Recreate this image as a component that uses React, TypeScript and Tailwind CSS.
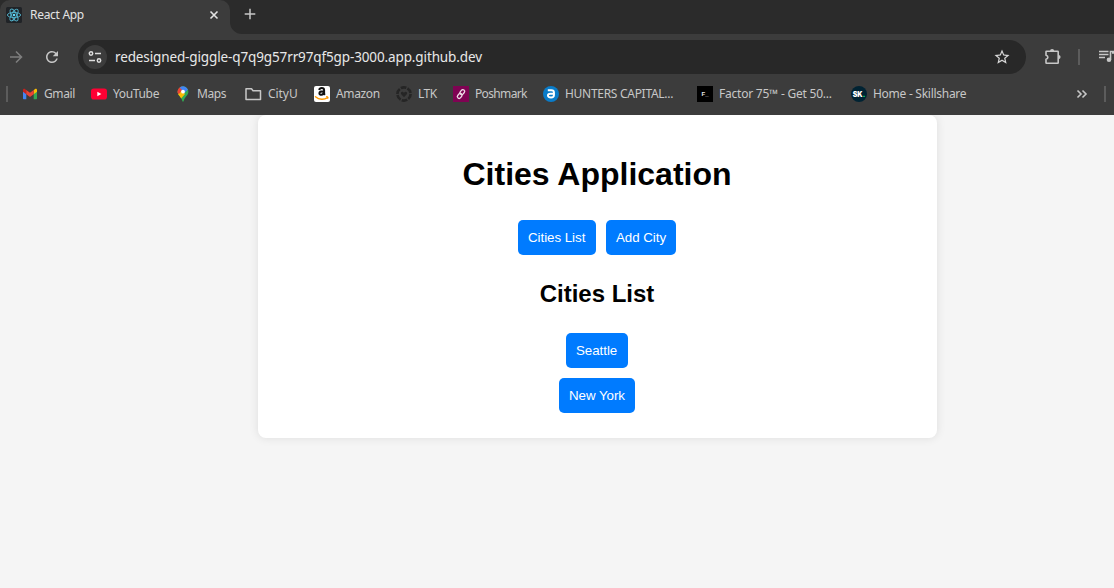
import type { ReactNode } from 'react';
import { MdRefresh, MdStarBorder } from 'react-icons/md';

const ReactLogo = () => (
  <svg width="16" height="16" viewBox="0 0 16 16">
    <rect width="16" height="16" rx="1.5" fill="#202327" />
    <g fill="none" stroke="#53b5cf" strokeWidth="0.9">
      <ellipse cx="8" cy="8" rx="6.6" ry="2.6" />
      <ellipse cx="8" cy="8" rx="6.6" ry="2.6" transform="rotate(60 8 8)" />
      <ellipse cx="8" cy="8" rx="6.6" ry="2.6" transform="rotate(120 8 8)" />
    </g>
    <circle cx="8" cy="8" r="1.3" fill="#61dafb" />
  </svg>
);

const Gmail = () => (
  <svg width="16" height="16" viewBox="0 0 16 16">
    <path d="M1 4.5V12.3c0 .6.4 1 1 1h2.3V7z" fill="#4285f4" />
    <path d="M15 4.5V12.3c0 .6-.4 1-1 1h-2.3V7z" fill="#34a853" />
    <path d="M11.7 4.3 13 3.1c.9-.7 2 0 2 1v1.7L11.7 8.3z" fill="#fbbc04" />
    <path d="M4.3 4.3 3 3.1C2.1 2.4 1 3.1 1 4.1v1.7l3.3 2.5z" fill="#c5221f" />
    <path d="M4.3 4 8 6.8 11.7 4v4.300L8 11.100 4.300 8.300z" fill="#ea4335" />
  </svg>
);

const YouTube = () => (
  <svg width="16" height="16" viewBox="0 0 16 16">
    <rect y="2.500" width="16" height="11" rx="2.800" fill="#ff0033" />
    <path d="M6.300 5.700v4.600L10.400 8z" fill="#fff" />
  </svg>
);

const Maps = () => (
  <svg width="16" height="16" viewBox="0 0 16 16">
    <defs>
      <clipPath id="pin">
        <path d="M8 .3A5.400 5.400 0 0 0 2.600 5.700c0 3.200 2.600 4.400 4.100 7.500.6 1.300.6 2.500 1.300 2.500s.7-1.200 1.300-2.500c1.500-3.100 4.100-4.300 4.100-7.500A5.400 5.400 0 0 0 8 .3z" />
      </clipPath>
    </defs>
    <g clipPath="url(#pin)">
      <path d="M0 0h16v16H0z" fill="#34a853" />
      <path d="M0 11 8 2v4l2 2-6 7H0z" fill="#fbbc04" />
      <path d="M0 0h7v3L3.500 7.500 0 5z" fill="#ea4335" />
      <path d="M5 0h9v2.500L9.500 7 5 3z" fill="#4285f4" />
      <path d="m2 2.500 2-1.500 3 3-3 4-2-1z" fill="#ea4335" />
    </g>
    <circle cx="8" cy="5.700" r="1.900" fill="#fff" />
  </svg>
);

const Folder = () => (
  <svg width="17" height="16" viewBox="0 0 17 16">
    <path d="M1 2.800h5.500l1.500 1.900h7.500v8.800H1z" fill="none" stroke="#c7c7c7" strokeWidth="1.500" strokeLinejoin="round" />
  </svg>
);

const Amazon = () => (
  <svg width="16" height="16" viewBox="0 0 16 16">
    <rect width="16" height="16" rx="2" fill="#fff" />
    <path d="M5.200 4C5.500 2.400 6.600 2 7.800 2c1.700 0 2.300.9 2.300 2.200v3c0 .8.300 1.200.8 1.700M9.400 5.200C6.600 5.200 5.400 6 5.400 7.200c0 2.300 4 2.100 4.200-.5" fill="none" stroke="#111" strokeWidth="2" />
    <path d="M1.500 10.800c3.700 3.200 8.700 3.100 12 .8" fill="none" stroke="#f90" strokeWidth="1.500" strokeLinecap="round" />
    <path d="M12 10.700c2-.5 2.500 0 1.700 2.200" fill="none" stroke="#f90" strokeWidth="1" />
  </svg>
);

const Ltk = () => (
  <svg width="16" height="16" viewBox="0 0 16 16">
    <circle cx="8" cy="8" r="6.600" fill="none" stroke="#252525" strokeWidth="2.600" strokeDasharray="5.700 1.200" />
    <path d="M8 11.300 5.200 8.300C4.200 7 5.500 5.300 7.100 6l.9.700.9-.7c1.600-.7 2.900 1 1.900 2.300z" fill="#252525" />
  </svg>
);

const Poshmark = () => (
  <svg width="16" height="16" viewBox="0 0 16 16">
    <path d="M0 0h16v16H0z" fill="#7f0353" />
    <g fill="none" stroke="#eddbe6" strokeWidth="1.300">
      <rect x="7.500" y="3.400" width="3.600" height="5.400" rx="1.800" transform="rotate(38 9.300 6.100)" />
      <rect x="4.900" y="7.200" width="3.600" height="5.400" rx="1.800" transform="rotate(38 6.700 9.900)" />
    </g>
  </svg>
);

const Hunters = () => (
  <svg width="16" height="16" viewBox="0 0 16 16">
    <circle cx="8" cy="8" r="8" fill="#0a7cc9" />
    <path d="M4.800 4.300h3.500c2 0 2.700.9 2.700 2.400v2c0 1.900-1.100 2.800-3 2.800-2 0-3.100-.6-3.100-1.900S6 7.800 7.400 7.800H11" fill="none" stroke="#fff" strokeWidth="1.900" />
  </svg>
);

const Factor = () => (
  <div className="flex size-4 items-center justify-center bg-black font-['Liberation_Sans'] text-[6px] leading-none font-bold text-[#e5e5e5]">F_</div>
);

const Skillshare = () => (
  <div className="flex size-4 items-center justify-center rounded-full bg-[#002333] font-['Inter'] text-[7px] leading-none font-black text-white">
    SK<span className="text-[#00ff84]">.</span>
  </div>
);

type Bookmark = { label: string; icon: ReactNode; width: string; text: string };

const bookmarks: Bookmark[] = [
  { label: 'Gmail', icon: <Gmail />, width: 'w-[69px]', text: 'tracking-[-0.4px]' },
  { label: 'YouTube', icon: <YouTube />, width: 'w-[84px]', text: 'tracking-[-0.35px]' },
  { label: 'Maps', icon: <Maps />, width: 'w-[70px]', text: 'tracking-[-0.45px]' },
  { label: 'CityU', icon: <Folder />, width: 'w-[69px]', text: 'tracking-[-0.05px]' },
  { label: 'Amazon', icon: <Amazon />, width: 'w-[82px]', text: 'tracking-[-0.35px]' },
  { label: 'LTK', icon: <Ltk />, width: 'w-[57px]', text: 'tracking-[-0.5px]' },
  { label: 'Poshmark', icon: <Poshmark />, width: 'w-[90px]', text: 'tracking-[-0.65px]' },
  { label: 'HUNTERS CAPITAL...', icon: <Hunters />, width: 'w-[154px]', text: 'tracking-[-0.29px]' },
  { label: 'Factor 75™ - Get 50...', icon: <Factor />, width: 'w-[154px]', text: 'tracking-[-0.23px]' },
  { label: 'Home - Skillshare', icon: <Skillshare />, width: 'w-[130px]', text: 'tracking-[-0.27px]' },
];

function TabStrip() {
  return (
    <div className="flex h-[34px] bg-[#2b2b2b]">
      <div className="flex w-[230px] items-center rounded-t-[10px] bg-[#3c3c3c] pr-[10px] pb-[5px] pl-[6px]">
        <ReactLogo />
        <span className="ml-2 flex-1 text-[12px] tracking-[-0.3px] text-[#e3e3e3]">React App</span>
        <svg width="12" height="12" viewBox="0 0 12 12" stroke="#e3e3e3" strokeWidth="1.600">
          <path d="m2.500 2.500 7 7m0-7-7 7" />
        </svg>
      </div>
      <svg className="self-end" width="12" height="12" viewBox="0 0 12 12">
        <path d="M0 0a12 12 0 0 0 12 12H0z" fill="#3c3c3c" />
      </svg>
      <svg className="mt-2 ml-[2px]" width="12" height="12" viewBox="0 0 12 12" stroke="#c7c7c7" strokeWidth="1.500">
        <path d="M6 .7v10.600M.7 6h10.600" />
      </svg>
    </div>
  );
}

function Toolbar() {
  return (
    <div className="flex h-[46px] items-center">
      <svg className="ml-2 shrink-0" width="16" height="16" viewBox="0 0 16 16" fill="none" stroke="#7e7e7e" strokeWidth="1.600">
        <path d="M2 8h11M8 2.500 13.500 8 8 13.500" />
      </svg>
      <MdRefresh className="ml-[19px] size-[18px] shrink-0 text-[#c7c7c7]" />
      <div className="ml-[17px] flex h-[34px] w-[948px] shrink-0 items-center rounded-full bg-[#282828] pr-[15px] pl-[5px]">
        <div className="flex size-6 items-center justify-center rounded-full bg-[#3c3c3c]">
          <svg width="14" height="14" viewBox="0 0 14 14" fill="none" stroke="#dedede" strokeWidth="1.500">
            <circle cx="3" cy="3.500" r="1.700" />
            <path d="M7 3.500h6M1 10.500h6" />
            <circle cx="11" cy="10.500" r="1.700" />
          </svg>
        </div>
        <span className="ml-2 flex-1 text-[13.500px] tracking-[-0.125px] text-[#e8e8e8]">
          redesigned-giggle-q7q9g57rr97qf5gp-3000.app.github.dev
        </span>
        <MdStarBorder className="size-[18px] text-[#d8d8d8]" />
      </div>
      <svg className="ml-[18px] shrink-0" width="18" height="18" viewBox="0 0 18 18">
        <path
          d="M2.500 3.200h11.200q.5 0 .5.500v11q0 .5-.5.500H2.500q-.5 0-.5-.5v-3.400c2.500-.6 2.500-3.500 0-4.100V3.700q0-.5.500-.5z"
          fill="none"
          stroke="#c7c7c7"
          strokeWidth="1.600"
          strokeLinejoin="round"
        />
        <path d="M6 3a2.100 2.100 0 0 1 4.200 0zM14.500 7a2.100 2.100 0 0 1 0 4.200z" fill="#c7c7c7" />
      </svg>
      <div className="ml-[16px] h-4 w-[2px] shrink-0 bg-[#5c5c5c]" />
      <svg className="ml-[18px] shrink-0" width="20" height="16" viewBox="0 0 20 16">
        <path d="M1 2.500h9.500M1 5.500h9.500M1 8.500h6" stroke="#c7c7c7" strokeWidth="1.500" />
        <path d="M12.500 10.500v-8h5v1.500h-3.500" fill="none" stroke="#c7c7c7" strokeWidth="1.600" />
        <circle cx="11" cy="10.800" r="2.300" fill="#c7c7c7" />
      </svg>
    </div>
  );
}

function BookmarksBar() {
  return (
    <div className="flex h-[35px] items-center pb-[7px]">
      <div className="ml-[6px] h-4 w-[2px] shrink-0 bg-[#5c5c5c]" />
      <div className="ml-[14px] flex flex-1">
        {bookmarks.map((b) => (
          <div key={b.label} className={`flex h-5 shrink-0 items-center gap-[6px] whitespace-nowrap ${b.width}`}>
            {b.icon}
            <span className={`text-[12px] text-[#c7c7c7] ${b.text}`}>{b.label}</span>
          </div>
        ))}
      </div>
      <svg width="12" height="10" viewBox="0 0 12 10" fill="none" stroke="#c7c7c7" strokeWidth="1.600">
        <path d="M1.500 1.500 5 5 1.500 8.500M6.500 1.500 10 5 6.500 8.500" />
      </svg>
      <div className="mr-2 ml-[16px] h-4 w-[2px] bg-[#5c5c5c]" />
    </div>
  );
}

function Button({ children, width }: { children: ReactNode; width: string }) {
  return (
    <button className={`flex h-[35px] items-center rounded-[5px] bg-[#007bff] pl-[10px] text-[13.333px] leading-[15px] tracking-[-0.04px] whitespace-nowrap text-white ${width}`}>
      {children}
    </button>
  );
}

export default function App() {
  return (
    <div className="h-[588px] w-[1114px] overflow-hidden bg-[#f5f5f5]">
      <header className="relative z-10 h-[115px] overflow-hidden bg-[#3c3c3c] font-['Noto_Sans',sans-serif]">
        <TabStrip />
        <Toolbar />
        <BookmarksBar />
      </header>
      <main className="ml-[258px] flex h-[323px] w-[679px] flex-col items-center rounded-lg bg-white pr-px font-['Liberation_Sans',Arial,sans-serif] text-black shadow-[0_0_10px_rgba(0,0,0,0.1)]">
        <h1 className="mt-[41px] text-[32px] leading-[37px] font-bold">Cities Application</h1>
        <nav className="mt-[27px] flex gap-[10px]">
          <Button width="w-[78px]">Cities List</Button>
          <Button width="w-[70px]">Add City</Button>
        </nav>
        <h2 className="mt-[25px] text-2xl leading-[28px] font-bold">Cities List</h2>
        <div className="mt-[25px] flex flex-col items-center gap-[10px]">
          <Button width="w-[62px]">Seattle</Button>
          <Button width="w-[76px]">New York</Button>
        </div>
      </main>
    </div>
  );
}
